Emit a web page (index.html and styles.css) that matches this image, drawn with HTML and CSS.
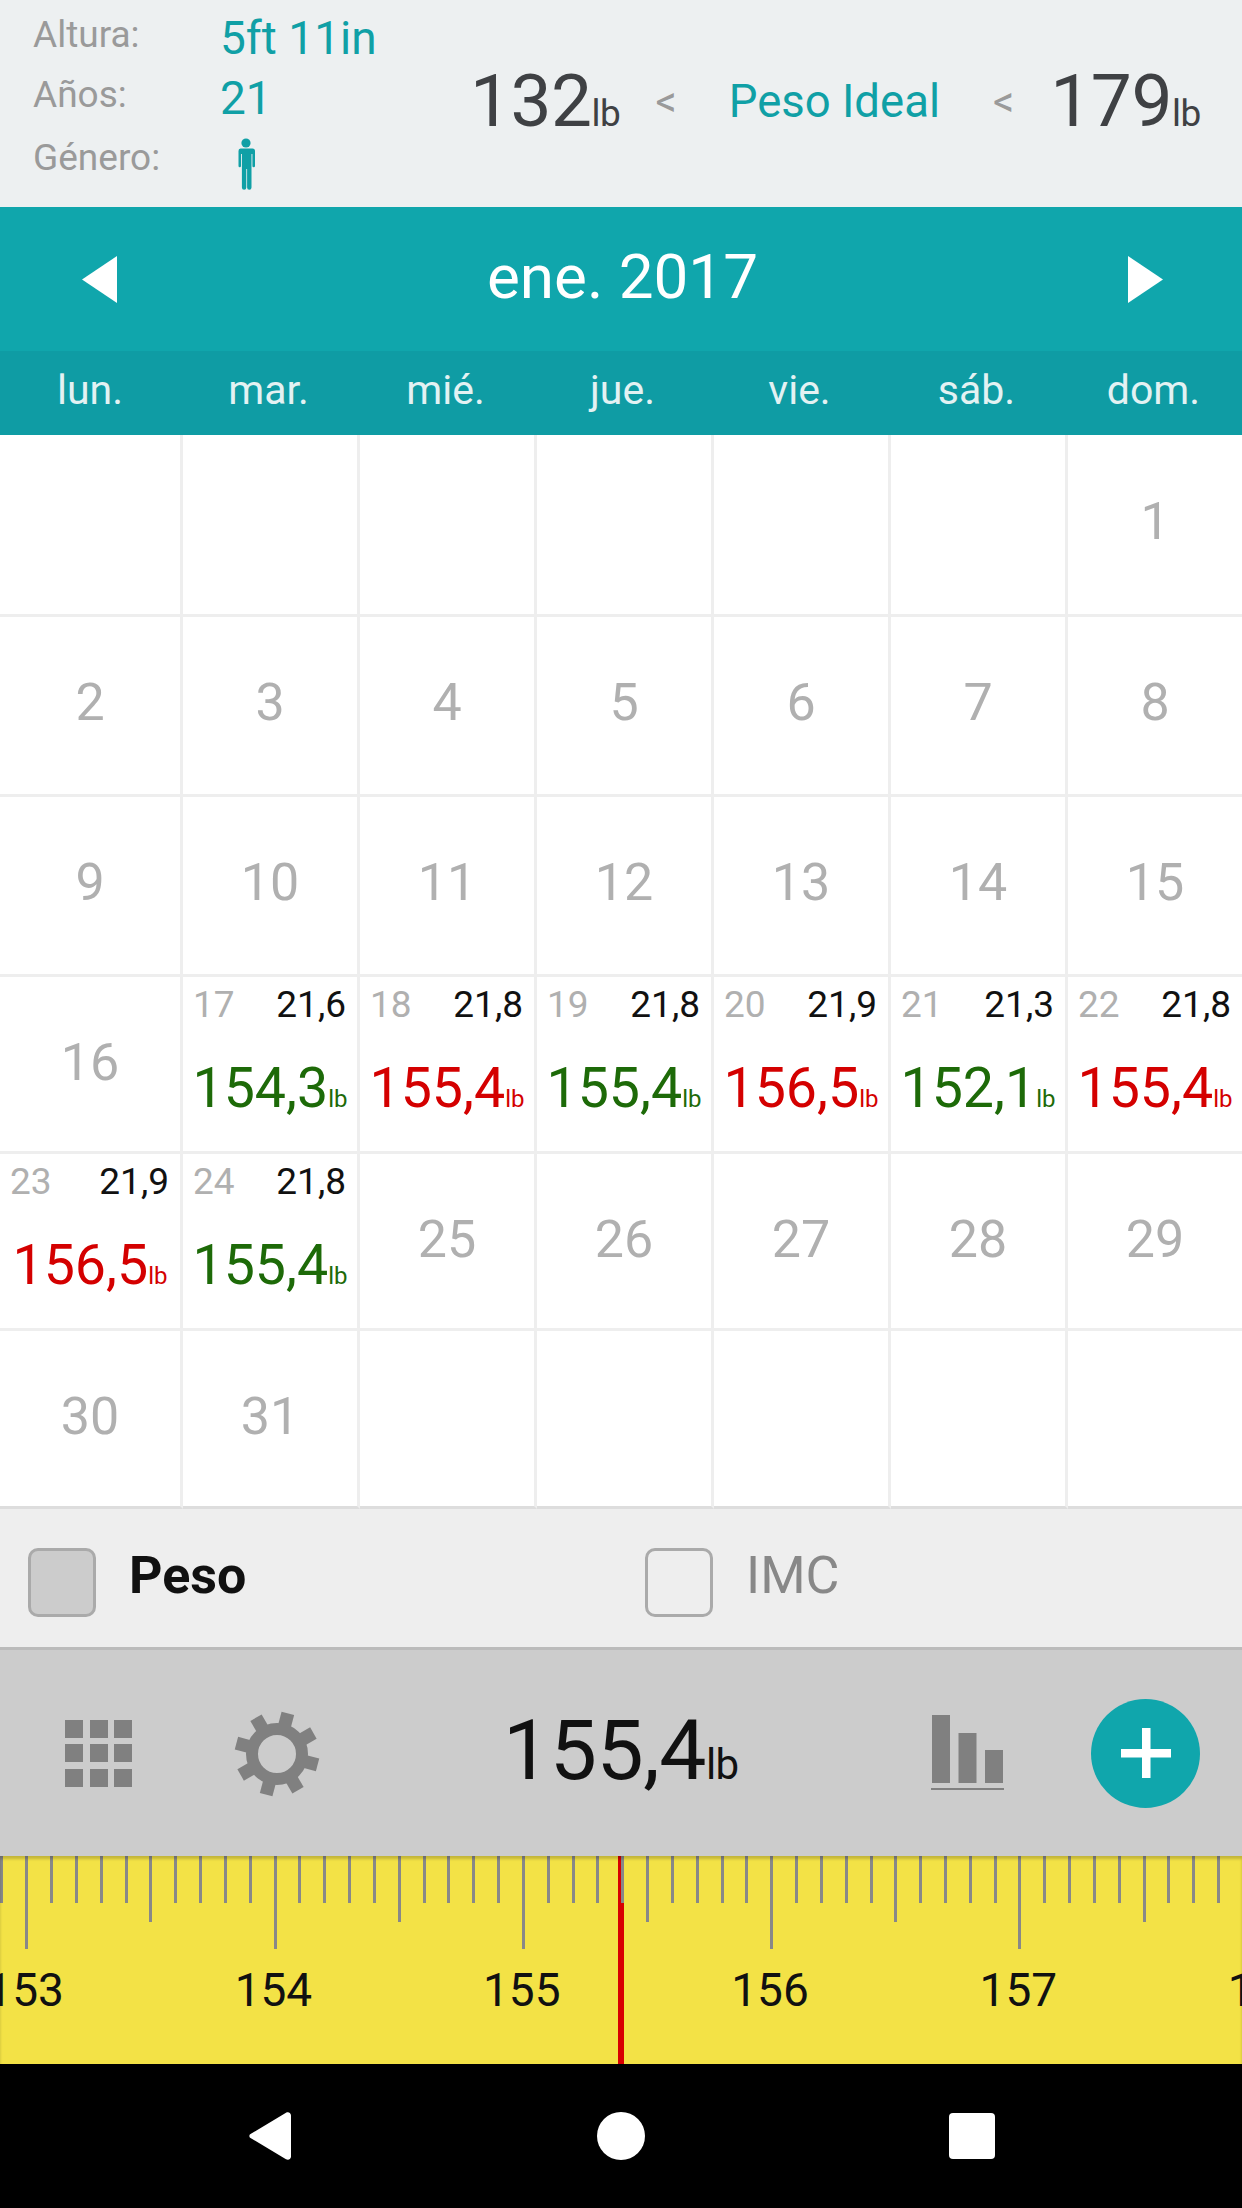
FILE: index.html
```html
<!DOCTYPE html>
<html lang="es">
<head>
    <meta charset="UTF-8">
    <title>Peso</title>
    <link rel="stylesheet" href="styles.css">
</head>
<body>
    <div class="app">
        <header class="profile">
            <div class="info">
                <div class="info-row"><span class="info-label">Altura:</span><span class="info-value">5ft 11in</span></div>
                <div class="info-row"><span class="info-label">Años:</span><span class="info-value">21</span></div>
                <div class="info-row gender"><span class="info-label">Género:</span>
                    <svg class="person" width="50" height="64" viewBox="0 0 50 64">
                        <circle cx="26" cy="12" r="4.6" fill="#10a0a6"/>
                        <path d="M19.5 17.5h13a2.5 2.5 0 0 1 2.5 2.5v15a1.2 1.2 0 0 1-2.6 0V23h-.9v33.5a2.2 2.2 0 0 1-4.4 0V38h-.8v18.5a2.2 2.2 0 0 1-4.4 0V23h-.9v12a1.2 1.2 0 0 1-2.5 0V20a2.5 2.5 0 0 1 2-2.5z" fill="#10a0a6"/>
                    </svg>
                </div>
            </div>
            <div class="ideal">
                <span class="ideal-num">132<small>lb</small></span>
                <span class="ideal-lt lt-first">&lt;</span>
                <span class="ideal-title">Peso Ideal</span>
                <span class="ideal-lt lt-second">&lt;</span>
                <span class="ideal-num num-last">179<small>lb</small></span>
            </div>
        </header>

        <nav class="month">
            <svg width="35" height="47" viewBox="0 0 35 47"><path d="M35 0v47L0 23.5z" fill="#fff"/></svg>
            <span class="month-name">ene. 2017</span>
            <svg width="35" height="47" viewBox="0 0 35 47"><path d="M0 0v47l35-23.5z" fill="#fff"/></svg>
        </nav>

        <div class="weekdays">
            <span>lun.</span><span>mar.</span><span>mié.</span><span>jue.</span><span>vie.</span><span>sáb.</span><span>dom.</span>
        </div>

        <div class="calendar">
            <div class="day"></div><div class="day"></div><div class="day"></div><div class="day"></div><div class="day"></div><div class="day"></div><div class="day">1</div>
            <div class="day">2</div><div class="day">3</div><div class="day">4</div><div class="day">5</div><div class="day">6</div><div class="day">7</div><div class="day">8</div>
            <div class="day">9</div><div class="day">10</div><div class="day">11</div><div class="day">12</div><div class="day">13</div><div class="day">14</div><div class="day">15</div>

            <div class="day">16</div>
            <div class="day entry"><div class="entry-head"><span class="entry-date">17</span><span>21,6</span></div><div class="entry-weight good">154,3<small>lb</small></div></div>
            <div class="day entry"><div class="entry-head"><span class="entry-date">18</span><span>21,8</span></div><div class="entry-weight bad">155,4<small>lb</small></div></div>
            <div class="day entry"><div class="entry-head"><span class="entry-date">19</span><span>21,8</span></div><div class="entry-weight good">155,4<small>lb</small></div></div>
            <div class="day entry"><div class="entry-head"><span class="entry-date">20</span><span>21,9</span></div><div class="entry-weight bad">156,5<small>lb</small></div></div>
            <div class="day entry"><div class="entry-head"><span class="entry-date">21</span><span>21,3</span></div><div class="entry-weight good">152,1<small>lb</small></div></div>
            <div class="day entry"><div class="entry-head"><span class="entry-date">22</span><span>21,8</span></div><div class="entry-weight bad">155,4<small>lb</small></div></div>

            <div class="day entry"><div class="entry-head"><span class="entry-date">23</span><span>21,9</span></div><div class="entry-weight bad">156,5<small>lb</small></div></div>
            <div class="day entry"><div class="entry-head"><span class="entry-date">24</span><span>21,8</span></div><div class="entry-weight good">155,4<small>lb</small></div></div>
            <div class="day">25</div><div class="day">26</div><div class="day">27</div><div class="day">28</div><div class="day">29</div>

            <div class="day">30</div><div class="day">31</div><div class="day"></div><div class="day"></div><div class="day"></div><div class="day"></div><div class="day"></div>
        </div>

        <div class="filters">
            <div class="filter filter-weight"><span class="check checked"></span><span class="filter-on">Peso</span></div>
            <div class="filter"><span class="check"></span><span class="filter-off">IMC</span></div>
        </div>

        <div class="toolbar">
            <div class="grid-icon"><i></i><i></i><i></i><i></i><i></i><i></i><i></i><i></i><i></i></div>
            <svg class="gear" width="86" height="86" viewBox="-43 -43 86 86">
                <g fill="#808080">
                    <rect x="-6.5" y="-42" width="13" height="20" transform="rotate(15)"/>
                    <rect x="-6.5" y="-42" width="13" height="20" transform="rotate(60)"/>
                    <rect x="-6.5" y="-42" width="13" height="20" transform="rotate(105)"/>
                    <rect x="-6.5" y="-42" width="13" height="20" transform="rotate(150)"/>
                    <rect x="-6.5" y="-42" width="13" height="20" transform="rotate(195)"/>
                    <rect x="-6.5" y="-42" width="13" height="20" transform="rotate(240)"/>
                    <rect x="-6.5" y="-42" width="13" height="20" transform="rotate(285)"/>
                    <rect x="-6.5" y="-42" width="13" height="20" transform="rotate(330)"/>
                </g>
                <circle r="25" fill="none" stroke="#808080" stroke-width="12"/>
            </svg>
            <span class="current">155,4<small>lb</small></span>
            <svg class="bars" width="74" height="76" viewBox="0 0 74 76">
                <g fill="#808080">
                    <rect x="1" y="0" width="18" height="68"/>
                    <rect x="27.5" y="18" width="18" height="50"/>
                    <rect x="54" y="35" width="18" height="33"/>
                    <rect x="0" y="73" width="73" height="2"/>
                </g>
            </svg>
            <button class="add">
                <svg width="50" height="50" viewBox="0 0 50 50"><path d="M21 0h8.500v21H50v8.500H29.500V50H21V29.500H0V21h21z" fill="#fff"/></svg>
            </button>
        </div>

        <div class="ruler">
            <div class="ruler-labels">
                <span>153</span><span>154</span><span>155</span><span>156</span><span>157</span><span>158</span>
            </div>
        </div>

        <div class="sysbar">
            <svg class="sys-back" width="42" height="48" viewBox="0 0 42 48"><path d="M37 .8 1.500 22a2.300 2.300 0 0 0 0 4L37 47.200c2.500 1.300 5-.3 5-2.700V3.500c0-2.400-2.500-4-5-2.700z" fill="#fff"/></svg>
            <span class="sys-home"></span>
            <span class="sys-recent"></span>
        </div>
    </div>
</body>
</html>
```

FILE: styles.css
```css
* {
    box-sizing: border-box;
}

body {
    margin: 0;
    font-family: Roboto, "Liberation Sans", sans-serif;
    background-color: #fff;
}

small {
    line-height: 1;
}

.app {
    width: 1242px;
    height: 2208px;
    overflow: hidden;
}

/* top block */
.profile {
    display: flex;
    height: 207px;
    background-color: #edf0f1;
}

.info {
    width: 470px;
    padding: 8px 0 0 33px;
}

.info-row {
    display: flex;
    height: 60px;
}

.info-row:nth-child(2) {
    height: 63px;
}

.info-label {
    width: 187px;
    font-size: 37px;
    line-height: 54px;
    color: #9a9a9a;
}

.info-value {
    font-size: 46px;
    line-height: 60px;
    color: #10a0a6;
}

.person {
    display: block;
}

.ideal {
    display: flex;
    align-items: center;
    height: 100px;
    margin-top: 51px;
}

.ideal-num {
    font-size: 73px;
    letter-spacing: -0.5px;
    line-height: 100px;
    color: #3f4144;
}

.ideal-num small {
    font-size: 37px;
}

.ideal-lt {
    font-size: 42px;
    color: #9a9a9a;
}

.lt-first {
    margin-left: 35px;
}

.lt-second {
    margin-left: 53px;
}

.ideal-title {
    margin-left: 52px;
    font-size: 45.500px;
    color: #10a0a6;
}

.num-last {
    margin-left: 36px;
}

/* month header */
.month {
    display: flex;
    align-items: center;
    justify-content: space-between;
    height: 144px;
    padding: 0 79px 0 82px;
    background-color: #10a6ac;
}

.month-name {
    margin-bottom: 5px;
    font-size: 62px;
    color: #fff;
}

.weekdays {
    display: grid;
    grid-template-columns: 180px repeat(5, 177px) 1fr;
    height: 84px;
    background-color: #0f9ca4;
    font-size: 41px;
    line-height: 79px;
    text-align: center;
    color: #e3f2f3;
}

/* calendar */
.calendar {
    display: grid;
    grid-template-columns: 183px repeat(5, 177px) 1fr;
    grid-template-rows: 182px 180px 180px 177px 177px 178px;
}

.day {
    display: flex;
    align-items: center;
    justify-content: center;
    padding-bottom: 4px;
    border-right: 3px solid #eee;
    border-bottom: 3px solid #eee;
    font-size: 52px;
    color: #b0b0b0;
}

.day:nth-child(-n+21) {
    padding-bottom: 6px;
}

.day:nth-child(7n) {
    border-right: none;
}

.day:nth-last-child(-n+7) {
    border-bottom-color: #ddd;
}

.entry {
    display: block;
    font-size: 37px;
    color: #111;
}

.entry-head {
    display: flex;
    justify-content: space-between;
    margin-top: 3px;
    padding: 0 11px 0 10px;
    line-height: 50px;
}

.entry-date {
    color: #b0b0b0;
}

.entry-weight {
    margin-top: 24px;
    font-size: 55.500px;
    line-height: 70px;
    text-align: center;
    white-space: nowrap;
}

.entry-weight small {
    font-size: 24px;
}

.good {
    color: #1d6a08;
}

.bad {
    color: #d40000;
}

/* filter row */
.filters {
    display: flex;
    height: 141px;
    padding: 39px 0 0 28px;
    background-color: #eee;
    border-bottom: 3px solid #bbb;
}

.filter {
    display: flex;
    font-size: 52px;
    line-height: 56px;
}

.filter-weight {
    width: 617px;
}

.check {
    width: 68px;
    height: 69px;
    margin-right: 33px;
    border: 3px solid #aaa;
    border-radius: 10px;
}

.checked {
    background-color: #ccc;
}

.filter-on {
    font-weight: 700;
    color: #111;
}

.filter-off {
    color: #888;
}

/* toolbar */
.toolbar {
    display: flex;
    align-items: center;
    height: 206px;
    padding-left: 65px;
    background-color: #ccc;
}

.grid-icon {
    display: grid;
    grid-template-columns: repeat(3, 18px);
    grid-auto-rows: 18px;
    gap: 6.5px;
}

.grid-icon i {
    background-color: #808080;
}

.gear {
    margin: 2px 0 0 102px;
}

.current {
    margin: 0 0 5px 183px;
    width: 428px;
    font-size: 84px;
    letter-spacing: -0.5px;
    color: #111;
}

.current small {
    font-size: 42px;
}

.add {
    display: flex;
    align-items: center;
    justify-content: center;
    width: 109px;
    height: 109px;
    margin-left: 86px;
    padding: 0;
    border: none;
    border-radius: 50%;
    background-color: #10a6ac;
}

/* ruler: ticks and pointer are background layers */
.ruler {
    height: 208px;
    background-color: #f3e246;
    background-image:
        repeating-linear-gradient(90deg, transparent 0 25.3px, #888 25.3px 28.3px, transparent 28.3px 248.3px),
        repeating-linear-gradient(90deg, transparent 0 25.3px, #888 25.3px 28.3px, transparent 28.3px 124.15px),
        repeating-linear-gradient(90deg, transparent 0 0.47px, #888 0.47px 3.47px, transparent 3.47px 24.83px),
        linear-gradient(#d80000, #d80000);
    background-repeat: no-repeat;
    background-size: 100% 93px, 100% 66px, 100% 47px, 6px 100%;
    background-position: 0 0, 0 0, 0 0, 618px 0;
    box-shadow: inset 0 3px 3px rgba(0, 0, 0, 0.2);
}

.ruler-labels {
    display: flex;
    margin-left: -99px;
    padding-top: 104px;
    font-size: 46px;
    line-height: 60px;
    color: #111;
}

.ruler-labels span {
    flex: 0 0 248.3px;
    text-align: center;
}

/* android buttons */
.sysbar {
    display: flex;
    align-items: center;
    height: 144px;
    padding-left: 249px;
    background-color: #000;
}

.sys-home {
    width: 48px;
    height: 48px;
    margin-left: 306px;
    border-radius: 50%;
    background-color: #fff;
}

.sys-recent {
    width: 46px;
    height: 46px;
    margin-left: 304px;
    border-radius: 4px;
    background-color: #fff;
}
```
